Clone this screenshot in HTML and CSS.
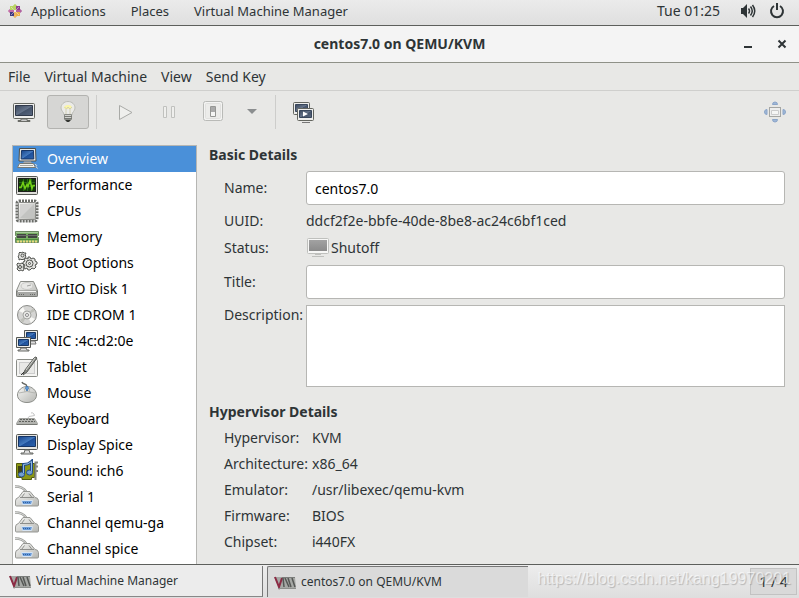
FILE: index.html
```html
<!DOCTYPE html>
<html lang="en">
<head>
  <meta charset="UTF-8" />
  <meta name="viewport" content="width=device-width, initial-scale=1.0"/>
  <title>centos7.0 on QEMU/KVM</title>
  <link rel="stylesheet" href="styles.css">
</head>
<body>
  <svg class="sprites" width="0" height="0" aria-hidden="true">
    <defs>
      <linearGradient id="metal" x1="0" y1="0" x2="1" y2="1"><stop offset="0" stop-color="#f8f8f6"/><stop offset="1" stop-color="#b4b5b1"/></linearGradient>
      <linearGradient id="blue" x1="0" y1="0" x2="1" y2="1"><stop offset="0" stop-color="#16438b"/><stop offset=".5" stop-color="#4379bd"/><stop offset=".55" stop-color="#1f509a"/><stop offset="1" stop-color="#2b63ac"/></linearGradient>
      <linearGradient id="slate" x1="0" y1="0" x2="1" y2="1"><stop offset="0" stop-color="#3a475b"/><stop offset=".5" stop-color="#66748a"/><stop offset=".55" stop-color="#46546a"/><stop offset="1" stop-color="#5a6880"/></linearGradient>
      <linearGradient id="grey" x1="0" y1="0" x2="0" y2="1"><stop offset="0" stop-color="#a2a2a2"/><stop offset="1" stop-color="#8b8b8b"/></linearGradient>
    </defs>
    <symbol id="computer" viewBox="0 0 24 24">
      <path d="M4.500 1.500h16l.5 12.500H4z" fill="#e8e8e4" stroke="#4e504c"/>
      <path d="M6.500 3.500h12l.3 8.500H6.200z" fill="url(#blue)" stroke="#173565"/>
      <path d="M9 14.500h7l1 2H8z" fill="#aaa"/>
      <path d="M4.500 16.500h14l2 4H2.500z" fill="#f2f2ee" stroke="#777974"/>
      <path d="M5 18.500h13" stroke="#a5a6a1"/>
      <path d="M20 17.500c2 0 2 1.500 1 2l1.500 2" fill="none" stroke="#ddd"/>
    </symbol>
    <symbol id="performance" viewBox="0 0 24 24">
      <rect x="1.500" y="3.500" width="21" height="18" rx="1" fill="#deded9" stroke="#555753"/>
      <rect x="3.500" y="5.500" width="17" height="13" fill="#123d08" stroke="#1c1e1b"/>
      <path d="M4 9.500h16M4 13.500h16M8.500 6v12M12.500 6v12M16.500 6v12" stroke="#27671a"/>
      <path d="M4 14.500h2l2-5 2 6 2-4 1 2 2-6 2 8 1-3h2" fill="none" stroke="#73d216" stroke-width="1.500"/>
    </symbol>
    <symbol id="cpu" viewBox="0 0 24 24">
      <rect x="2" y="2" width="20" height="20" rx="2" fill="none" stroke="#6a6c68" stroke-width="3" stroke-dasharray="2 1"/>
      <rect x="3.500" y="3.500" width="17" height="17" rx="1" fill="url(#metal)" stroke="#8a8b88"/>
      <rect x="5" y="5" width="14" height="14" fill="#d2d2d1"/>
      <path d="M5 19L19 5v14z" fill="#c2c3c1"/>
    </symbol>
    <symbol id="memory" viewBox="0 0 24 24">
      <path d="M.500 6.500h23v4l-1 1 1 1v5H.500v-5l1-1-1-1z" fill="#76ad63" stroke="#6c8a62"/>
      <path d="M1 7.500h22" stroke="#a9cc9c"/>
      <path d="M2 9h9v4H2zM13 9h9v4h-9z" fill="#424542"/>
      <path d="M2 10.500h20" stroke="#6d706c"/>
      <path d="M1 14.500h22" stroke="#4f8d3c"/>
      <path d="M2 16.500h20" stroke="#e8d97e" stroke-width="2" stroke-dasharray="2 1"/>
    </symbol>
    <symbol id="gears" viewBox="0 0 24 24">
      <g fill="#e4e4e1" stroke="#51534f">
        <path d="M4 2l1-1 1 1 2-1 1 1 2 0-1 2 1 1-1 2 0 2-2-1-1 1-1-1-2 1 0-2-1-1 1-2z"/>
        <path d="M2 13l1-1 2 1 2-1 1 1 1 1-1 2 1 2-1 2-2-1-2 1-1-1-1-1 1-2-1-2z"/>
        <path d="M13 6h2l1 2 2-1 2 1v2l2 1v2l-2 1 1 2-2 2-2-1-2 2h-2l-1-2-2 1-1-2 1-2-2-1v-2l2-1-1-2 2-1 2 1z"/>
        <circle cx="7.500" cy="4.500" r="1.500"/><circle cx="5" cy="16" r="1.500"/><circle cx="14.500" cy="12.500" r="3.500"/><circle cx="14.500" cy="12.500" r="1"/>
      </g>
    </symbol>
    <symbol id="disk" viewBox="0 0 24 24">
      <path d="M5.500 4.500h13l4 9v5q0 1-1 1h-19q-1 0-1-1v-5z" fill="url(#metal)" stroke="#8a8c87"/>
      <path d="M1.500 14h21v4.500q0 1-1 1h-19q-1 0-1-1z" fill="#a7a8a5" stroke="#7b7d78"/>
      <ellipse cx="12" cy="9" rx="6" ry="3.500" fill="#e8e8e6" stroke="#c8c8c5"/>
      <path d="M12 9l4-1" stroke="#a0a19e"/>
      <path d="M4 17.500h6M15 17.500h5" stroke="#686a66" stroke-dasharray="1 1"/>
      <path d="M3 14.500h18" stroke="#f5f5f3"/>
    </symbol>
    <symbol id="cdrom" viewBox="0 0 24 24">
      <circle cx="12" cy="12" r="9.500" fill="#d5d5d3" stroke="#8b8c89"/>
      <path d="M12 12L8 4l-4 4zM12 12l8 4-4 4z" fill="#f8f8f5"/>
      <path d="M12 12l8-4-2-3zM12 12l-7 5 3 3z" fill="#bfc0ba"/>
      <circle cx="12" cy="12" r="4" fill="#e9e9e6" stroke="#a4a5a2"/>
      <circle cx="12" cy="12" r="1.500" fill="#fff" stroke="#888"/>
    </symbol>
    <symbol id="network" viewBox="0 0 24 24">
      <path d="M9.500 1.500h13v10h-13z" fill="#ecece8" stroke="#555753"/>
      <path d="M11.500 3.500h9v6h-9z" fill="url(#blue)" stroke="#183764"/>
      <path d="M15 12h5l1 3h-6z" fill="#ddd" stroke="#777"/>
      <path d="M1.500 8.500h14v10h-14z" fill="#ecece8" stroke="#555753"/>
      <path d="M3.500 10.500h10v6h-10z" fill="url(#blue)" stroke="#183764"/>
      <path d="M6 19h5l1 2h2v1H3v-1h2z" fill="#ddd" stroke="#666864"/>
    </symbol>
    <symbol id="tablet" viewBox="0 0 24 24">
      <rect x="1.500" y="4.500" width="21" height="17" rx="1" fill="#f4f4f2" stroke="#8a8c87"/>
      <rect x="4.500" y="7.500" width="15" height="11" fill="#e9e9e7" stroke="#ccc"/>
      <path d="M8 20l2-5L19 3q2-2 3 0L12 17z" fill="#888a85" stroke="#5a5c58"/>
      <path d="M11 15l9-12" stroke="#d4d5d1"/>
      <path d="M6 20l3-3" stroke="#333"/>
    </symbol>
    <symbol id="mouse" viewBox="0 0 24 24">
      <path d="M11.500 7V4.500q0-1-2-1.500T7 1" fill="none" stroke="#656762" stroke-width="1.500"/>
      <path d="M12 5.500c5 0 9.500 4 9.500 8.500s-4 7.500-9.500 7.500S2.500 18.500 2.500 14 7 5.500 12 5.500z" fill="url(#metal)" stroke="#8b8d88"/>
      <path d="M4 12q8-3 16 0M9 7l1 4M15 7l-1 4" fill="none" stroke="#b5b6b2"/>
      <path d="M12 5l1.500 2-1.500 3-1.500-3z" fill="#6da4df" stroke="#4078b3"/>
    </symbol>
    <symbol id="keyboard" viewBox="0 0 24 24">
      <path d="M13 11q0-2 4-2t2-2-3-1" fill="none" stroke="#c4c4c4"/>
      <path d="M4.500 11.500h15l3 5v1h-21v-1z" fill="#b2b3af" stroke="#a2a39f"/>
      <path d="M5 12.500h14M4 14.500h16" stroke="#5f615d" stroke-dasharray="2 1"/>
      <path d="M2 17.500h20" stroke="#777974"/>
    </symbol>
    <symbol id="display" viewBox="0 0 24 24">
      <rect x="1.500" y="1.500" width="21" height="15" rx="1" fill="#e5e5e1" stroke="#555753"/>
      <path d="M3.500 3.500h17v10h-17z" fill="url(#blue)" stroke="#173565"/>
      <path d="M10 17h4l1 3h3v1H6v-1h3z" fill="#ddd" stroke="#666864"/>
    </symbol>
    <symbol id="sound" viewBox="0 0 24 24">
      <path d="M1.500 4.500h18v14h-3v2H7v-2H1.500z" fill="#8b9714" stroke="#535b0c"/>
      <path d="M3 7h5v7H3z" fill="#3e4216"/>
      <path d="M20.500 21V3.500H23M20 7.500h3M20 12h3" fill="none" stroke="#888a85" stroke-width="2"/>
      <path d="M8.500 15V5.500q5 0 8-3v11" fill="none" stroke="#234c86" stroke-width="3"/>
      <ellipse cx="6.500" cy="15.500" rx="3" ry="2.500" fill="#729fcf" stroke="#234c86"/>
      <ellipse cx="14.500" cy="13.500" rx="3" ry="2.500" fill="#729fcf" stroke="#234c86"/>
      <path d="M8.500 14V5.500q5 0 8-3v10" fill="none" stroke="#91b9e5"/>
    </symbol>
    <symbol id="serial" viewBox="0 0 24 24">
      <path d="M0 1.500q8 0 11 5" fill="none" stroke="#999b96" stroke-width="2.500"/>
      <path d="M0 1.500q8 0 11 5" fill="none" stroke="#ddd"/>
      <path d="M8 6.500h7l5 6q3 0 3.500 3v4.500q0 1-1 1h-21q-1 0-1-1v-4q0-3 3-3.500z" fill="url(#metal)" stroke="#969793"/>
      <path d="M5 12.500h14M9.500 8.500l-3 4M14 8.500l3 4" stroke="#8d8e8b"/>
      <path d="M6.500 15.500h11l-1 4h-9z" fill="#6a9bd8" stroke="#d7e4f2"/>
      <path d="M8 17.500h8" stroke="#2d5fa0" stroke-dasharray="1 1"/>
    </symbol>
    <symbol id="console" viewBox="0 0 24 24">
      <rect x="1.500" y="3.500" width="21" height="15" rx="1" fill="#eeeeec" stroke="#63655f"/>
      <path d="M3.500 5.500h17v10h-17z" fill="url(#slate)" stroke="#30394a"/>
      <path d="M9 19h6v1.500h3v1H6v-1h3z" fill="#ccc" stroke="#6b6d68"/>
    </symbol>
    <symbol id="shutoff" viewBox="0 0 24 24">
      <rect x="1.500" y="2.500" width="21" height="15" rx="1" fill="#f7f7f6" stroke="#bfc0bd"/>
      <path d="M3 4h18v11H3z" fill="url(#grey)"/>
      <path d="M9 18.500h6M6 20.500h12" stroke="#bfc0bd"/>
    </symbol>
    <symbol id="vmm" viewBox="0 0 24 24">
      <path d="M1 7h21l1 11H6z" fill="#a6a8a5"/>
      <path d="M2 7l4 10 3-9" fill="none" stroke="#8c2a44" stroke-width="2"/>
      <path d="M10 8l1 9M12 8l4 9M15 8l3 9M19 8l3 9" fill="none" stroke="#555755" stroke-width="1.500"/>
      <path d="M9 7.500h13" stroke="#7b7d7b"/>
      <path d="M5 18.500h18" stroke="#8d8f8c"/>
    </symbol>
  </svg>

  <header class="panel">
    <nav class="panel-menu">
      <button class="panel-item apps">
        <svg width="14" height="14" viewBox="0 0 14 14">
          <path d="M7 0l2 2v4H5V2z" fill="#a5c739"/><path d="M14 7l-2 2H8V5h4z" fill="#9c3587"/><path d="M7 14l-2-2V8h4v4z" fill="#e9a43b"/><path d="M0 7l2-2h4v4H2z" fill="#b34390"/>
          <path d="M2 2h4v3L5 6H2z" fill="#b8d460"/><path d="M8 2h4v4H9L8 5z" fill="#8e3c91"/><path d="M8 9l1-1h3v4H8z" fill="#edb04c"/><path d="M2 8h3l1 1v3H2z" fill="#403b84"/>
          <path d="M3 3l8 8M11 3l-8 8M7 1v12M1 7h12" stroke="#f4eee8" stroke-width=".5"/>
        </svg>
        Applications
      </button>
      <button class="panel-item">Places</button>
      <button class="panel-item">Virtual Machine Manager</button>
    </nav>
    <div class="panel-status">
      <span>Tue 01:25</span>
      <button class="panel-item" aria-label="Volume">
        <svg width="16" height="16" viewBox="0 0 16 16"><path d="M1 5h2l4-4v14l-4-4H1z" fill="#2e3436"/><path d="M8.500 5.500q2 2.500 0 5M10.500 3.500q3.500 4.500 0 9M12.500 2q4.500 6 0 12" fill="none" stroke="#2e3436" stroke-width="1.500"/></svg>
      </button>
      <button class="panel-item" aria-label="Power">
        <svg width="16" height="16" viewBox="0 0 16 16"><path d="M5 3a6 6 0 1 0 6 0M8 0v7" fill="none" stroke="#2e3436" stroke-width="2"/></svg>
      </button>
    </div>
  </header>

  <div class="titlebar">
    <h1>centos7.0 on QEMU/KVM</h1>
    <div class="window-buttons">
      <button aria-label="Minimize"><svg width="10" height="10" viewBox="0 0 10 10"><path d="M1 8h8" stroke="#2e3436" stroke-width="2"/></svg></button>
      <button aria-label="Close"><svg width="10" height="10" viewBox="0 0 10 10"><path d="M1.500 1.500l7 7M8.500 1.500l-7 7" stroke="#2e3436" stroke-width="2"/></svg></button>
    </div>
  </div>

  <nav class="menubar">
    <button>File</button>
    <button>Virtual Machine</button>
    <button>View</button>
    <button>Send Key</button>
  </nav>

  <div class="toolbar">
    <button class="tool" aria-label="Console"><svg width="24" height="24"><use href="#console"/></svg></button>
    <button class="tool active" aria-label="Details">
      <svg width="24" height="24" viewBox="0 0 24 24">
        <path d="M12 1.500c4 0 7 3 7 6.500 0 3-3 4-3 7H8c0-3-3-4-3-7 0-3.500 3-6.500 7-6.500z" fill="#f0f0ec" fill-opacity=".8" stroke="#bbbcb6"/>
        <path d="M8 7q1-2 4-2t4 2-4 2-4-2z" fill="#fbf6a5"/>
        <path d="M8.500 7l2 2 1.500-2 2 2 2-2M10 9v6M14 9v6" fill="none" stroke="#d2cfb4"/>
        <path d="M8.500 14.500h7v5h-7z" fill="#d2d3cf" stroke="#888a85"/>
        <path d="M8 16.500h8M8 18.500h8" stroke="#777974"/><path d="M9 20h6l-2 2h-2z" fill="#343632"/>
      </svg>
    </button>
    <span class="separator"></span>
    <button class="tool" aria-label="Run"><svg width="24" height="24" viewBox="0 0 24 24"><path d="M6.500 5.500v14L19 12.500z" fill="#efefed" stroke="#a9aaa7"/></svg></button>
    <button class="tool" aria-label="Pause"><svg width="24" height="24" viewBox="0 0 24 24"><path d="M6.500 6.500h3v11h-3zM14.500 6.500h3v11h-3z" fill="#efefed" stroke="#c0c1be"/></svg></button>
    <button class="tool" aria-label="Shut down"><svg width="24" height="24" viewBox="0 0 24 24"><rect x="2.500" y="1.500" width="19" height="19" rx="2" fill="#f3f3f2" stroke="#b9bab7"/><rect x="4.500" y="3.500" width="15" height="15" rx="1" fill="#ececea" stroke="#e1e1df"/><path d="M9.500 6.500h5v10h-5z" fill="#f6f6f5" stroke="#969794"/><path d="M10 7h4v5h-4z" fill="#aaa"/></svg></button>
    <button class="tool narrow" aria-label="Shut down menu"><svg width="10" height="6" viewBox="0 0 10 6"><path d="M0 0h10L5 5z" fill="#8b8e8f"/></svg></button>
    <span class="separator"></span>
    <button class="tool" aria-label="Snapshots">
      <svg width="24" height="24" viewBox="0 0 24 24">
        <rect x="1.500" y="2.500" width="16" height="12" rx="1" fill="#eeeeec" stroke="#63655f"/><path d="M3.500 4.500h12v7h-12z" fill="url(#slate)" stroke="#39475c"/>
        <rect x="5.500" y="8.500" width="16" height="12" rx="1" fill="#eeeeec" stroke="#63655f"/><path d="M7.500 10.500h12v7h-12z" fill="url(#slate)" stroke="#39475c"/>
        <path d="M11 11.500v5l5-2.500z" fill="#fff"/><path d="M10 22.500h8" stroke="#777"/>
      </svg>
    </button>
    <button class="tool fullscreen" aria-label="Fullscreen">
      <svg width="24" height="24" viewBox="0 0 24 24">
        <g fill="#9fb7d7" stroke="#8ba5c9"><path d="M9.500 4.500q0-2.500 2.500-2.500t2.500 2.500zM9.500 19.500q0 2.500 2.500 2.500t2.500-2.500zM4 9.500q-2.500 0-2.500 2.500t2.500 2.500zM20 9.500q2.500 0 2.500 2.500t-2.500 2.500z"/></g>
        <rect x="6.500" y="7.500" width="11" height="9" fill="#eee" stroke="#a5a6a3"/><path d="M8.500 10.500h7v4h-7z" fill="#f6f6f5" stroke="#ccc"/>
      </svg>
    </button>
  </div>

  <main class="content">
    <ul class="hardware">
      <li><button class="selected"><svg width="24" height="24"><use href="#computer"/></svg>Overview</button></li>
      <li><button><svg width="24" height="24"><use href="#performance"/></svg>Performance</button></li>
      <li><button><svg width="24" height="24"><use href="#cpu"/></svg>CPUs</button></li>
      <li><button><svg width="24" height="24"><use href="#memory"/></svg>Memory</button></li>
      <li><button><svg width="24" height="24"><use href="#gears"/></svg>Boot Options</button></li>
      <li><button><svg width="24" height="24"><use href="#disk"/></svg>VirtIO Disk 1</button></li>
      <li><button><svg width="24" height="24"><use href="#cdrom"/></svg>IDE CDROM 1</button></li>
      <li><button><svg width="24" height="24"><use href="#network"/></svg>NIC :4c:d2:0e</button></li>
      <li><button><svg width="24" height="24"><use href="#tablet"/></svg>Tablet</button></li>
      <li><button><svg width="24" height="24"><use href="#mouse"/></svg>Mouse</button></li>
      <li><button><svg width="24" height="24"><use href="#keyboard"/></svg>Keyboard</button></li>
      <li><button><svg width="24" height="24"><use href="#display"/></svg>Display Spice</button></li>
      <li><button><svg width="24" height="24"><use href="#sound"/></svg>Sound: ich6</button></li>
      <li><button><svg width="24" height="24"><use href="#serial"/></svg>Serial 1</button></li>
      <li><button><svg width="24" height="24"><use href="#serial"/></svg>Channel qemu-ga</button></li>
      <li><button><svg width="24" height="24"><use href="#serial"/></svg>Channel spice</button></li>
    </ul>

    <div class="details">
      <section>
        <h2>Basic Details</h2>
        <div class="fields basic">
          <label for="name">Name:</label>
          <input id="name" type="text" value="centos7.0">
          <span>UUID:</span>
          <span>ddcf2f2e-bbfe-40de-8be8-ac24c6bf1ced</span>
          <span>Status:</span>
          <span class="status"><svg width="24" height="24"><use href="#shutoff"/></svg>Shutoff</span>
          <label for="title">Title:</label>
          <input id="title" type="text">
          <label for="description" class="top">Description:</label>
          <textarea id="description"></textarea>
        </div>
      </section>
      <section>
        <h2>Hypervisor Details</h2>
        <div class="fields hypervisor">
          <span>Hypervisor:</span><span>KVM</span>
          <span>Architecture:</span><span>x86_64</span>
          <span>Emulator:</span><span>/usr/libexec/qemu-kvm</span>
          <span>Firmware:</span><span>BIOS</span>
          <span>Chipset:</span><span>i440FX</span>
        </div>
      </section>
    </div>
  </main>

  <footer class="taskbar">
    <button class="task"><svg width="24" height="24"><use href="#vmm"/></svg>Virtual Machine Manager</button>
    <button class="task current"><svg width="24" height="24"><use href="#vmm"/></svg>centos7.0 on QEMU/KVM</button>
    <button class="pager">1 / 4</button>
    <span class="watermark">https://blog.csdn.net/kang19970201</span>
  </footer>
</body>
</html>
```
FILE: styles.css
```css
* {
  box-sizing: border-box;
}

body {
  margin: 0;
  min-height: 100vh;
  display: flex;
  flex-direction: column;
  font-family: "Noto Sans", sans-serif;
  font-size: 14px;
  line-height: 20px;
  color: #2e3436;
  background-color: #e8e8e6;
}

button, input, textarea {
  font: inherit;
  color: inherit;
  margin: 0;
}

button {
  padding: 0;
  border: none;
  background: none;
  white-space: nowrap;
}

svg {
  display: block;
  flex-shrink: 0;
}

.sprites {
  position: absolute;
}

.panel {
  display: flex;
  justify-content: space-between;
  height: 26px;
  padding: 0 14px 3px 8px;
  font-size: 13px;
  background: linear-gradient(#ebebeb, #dfdfdf);
  border-bottom: 1px solid #5d5f5c;
}

.panel-menu, .panel-status, .apps {
  display: flex;
  align-items: center;
}

.panel-menu {
  gap: 25px;
}

.panel-status {
  gap: 13px;
}

.panel-status span {
  margin-right: 7px;
  font-size: 14px;
}

.apps {
  gap: 9px;
}

.titlebar {
  position: relative;
  display: flex;
  align-items: center;
  justify-content: center;
  height: 37px;
  background-color: #f4f4f4;
  border-bottom: 1px solid #8f9188;
}

.titlebar h1 {
  margin: 0;
  font-size: 14px;
}

.window-buttons {
  position: absolute;
  right: 12px;
  display: flex;
  gap: 24px;
}

.menubar {
  display: flex;
  gap: 14px;
  height: 28px;
  padding: 0 8px;
  border-bottom: 1px solid #cfcfcd;
}

.toolbar {
  display: flex;
  align-items: center;
  gap: 2px;
  height: 43px;
  padding: 0 3px 2px;
}

.tool {
  display: flex;
  align-items: center;
  justify-content: center;
  width: 42px;
  height: 34px;
  border: 1px solid transparent;
  border-radius: 3px;
}

.tool.active {
  background-color: #d6d6d4;
  border-color: #b3b3b0;
}

.tool.narrow {
  width: 32px;
}

.fullscreen {
  margin-left: auto;
}

.separator {
  width: 1px;
  height: 34px;
  margin: 0 5px;
  background-color: #cdcdcb;
}

.content {
  flex: 1;
  display: flex;
  gap: 12px;
  padding: 11px 14px 0 12px;
}

.hardware {
  flex: 0 0 185px;
  margin: 0;
  padding: 0;
  list-style: none;
  color: #000;
  background-color: #fff;
  border: 1px solid #b6b6b3;
  border-bottom: none;
}

.hardware button {
  display: flex;
  align-items: center;
  gap: 8px;
  width: 100%;
  height: 26px;
  padding: 0 2px;
}

.hardware .selected {
  color: #fff;
  background-color: #4a90d9;
}

.details {
  flex: 1;
  display: flex;
  flex-direction: column;
  gap: 15px;
  min-width: 0;
}

.details h2 {
  margin: 0 0 6px;
  font-size: 14px;
  line-height: 20px;
}

.fields {
  display: grid;
  gap: 6px;
  align-items: center;
  padding-left: 15px;
}

.basic {
  grid-template-columns: 76px 1fr;
  grid-template-rows: 34px 20px 22px 34px 82px;
}

.hypervisor {
  grid-template-columns: 82px 1fr;
}

.fields .top {
  align-self: start;
}

input, textarea {
  display: block;
  width: 100%;
  height: 100%;
  padding: 0 8px;
  color: #000;
  background-color: #fff;
  border: 1px solid #b6b6b3;
  border-radius: 3px;
}

textarea {
  border-radius: 0;
  resize: none;
}

.status {
  display: flex;
  align-items: center;
  gap: 1px;
}

.taskbar {
  position: relative;
  display: flex;
  gap: 4px;
  height: 34px;
  padding: 1px 2px 0 0;
  background: linear-gradient(#ededed, #dedede);
  border-top: 1px solid #5d5f5c;
}

.task {
  display: flex;
  align-items: center;
  gap: 4px;
  flex: 0 1 263px;
  height: 31px;
  padding: 0 8px;
  font-size: 12px;
  background-color: #ececec;
  border-right: 1px solid #777;
  border-bottom: 1px solid #888;
}

.task.current {
  flex-basis: 261px;
  padding: 0 5px;
  background-color: #dadada;
  border: solid #777;
  border-width: 1px 0 0 1px;
  border-radius: 2px 0 0 0;
}

.pager {
  width: 47px;
  height: 27px;
  margin: 2px 0 0 auto;
  background-color: #d9d9d9;
  border: 1px solid #c2c2c2;
}

.watermark {
  position: absolute;
  right: 8px;
  top: 4px;
  font-family: "Liberation Sans", sans-serif;
  font-size: 16px;
  color: rgba(255, 255, 255, 0.6);
  text-shadow: 1px 1px 1px rgba(0, 0, 0, 0.2);
  pointer-events: none;
}
```
